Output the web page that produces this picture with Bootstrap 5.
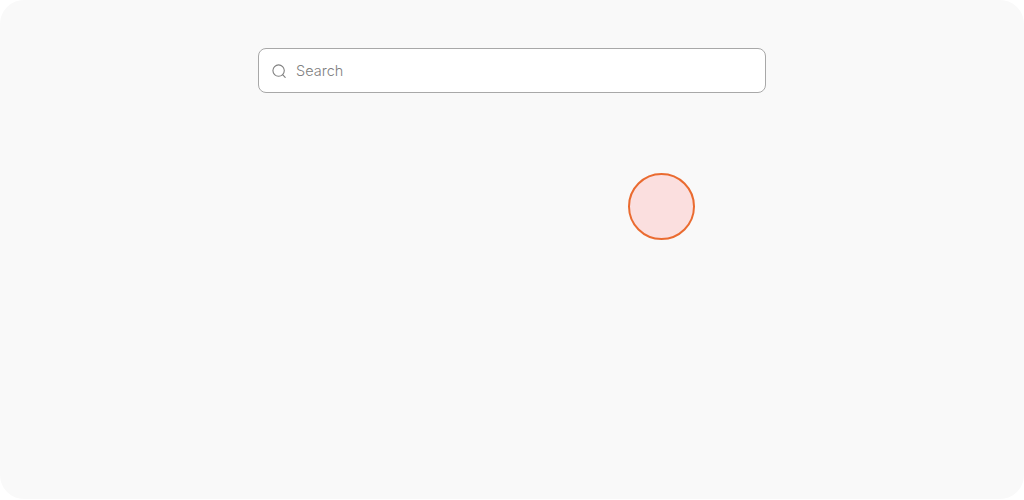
<!DOCTYPE html>
<html lang="en">
<head>
<meta charset="utf-8">
<title>Search</title>
<link href="https://cdn.jsdelivr.net/npm/bootstrap@5.3.0/dist/css/bootstrap.min.css" rel="stylesheet">
<style>
html, body { background: #fff; margin: 0; height: 100%; overflow: hidden; }
.stage { width: 1024px; height: 499px; background: #f9f9f9; border-radius: 24px; padding-top: 48px; position: relative; font-family: Inter, "Liberation Sans", sans-serif; }
.searchbox { width: 508px; height: 45px; background: #fff; border: 1px solid #a8a8a8; border-radius: 8px; padding-left: 12px; gap: 9px; }
.searchbox svg { flex: none; }
.searchbox input { border: 0; outline: 0; background: transparent; padding: 0; font-size: 14.5px; font-weight: 300; color: #808080; width: 100%; font-family: inherit; }
.searchbox input::placeholder { color: #808080; opacity: 1; }
.pin { position: absolute; left: 628px; top: 173px; width: 67px; height: 67px; border-radius: 50%; background: #fbdfdf; border: 2px solid #ea6b30; }
</style>
</head>
<body>
<div class="stage">
  <div class="searchbox d-flex align-items-center mx-auto">
    <svg width="16" height="16" viewBox="0 0 16 16" fill="none" stroke="#808080" stroke-width="1.1" stroke-linecap="round" aria-hidden="true"><circle cx="7.6" cy="7.6" r="5.7"/><path d="M11.8 11.8 14.2 14.4"/></svg>
    <input type="text" placeholder="Search" aria-label="Search">
  </div>
  <div class="pin"></div>
</div>
<script src="https://cdn.jsdelivr.net/npm/bootstrap@5.3.0/dist/js/bootstrap.bundle.min.js"></script>
</body>
</html>
